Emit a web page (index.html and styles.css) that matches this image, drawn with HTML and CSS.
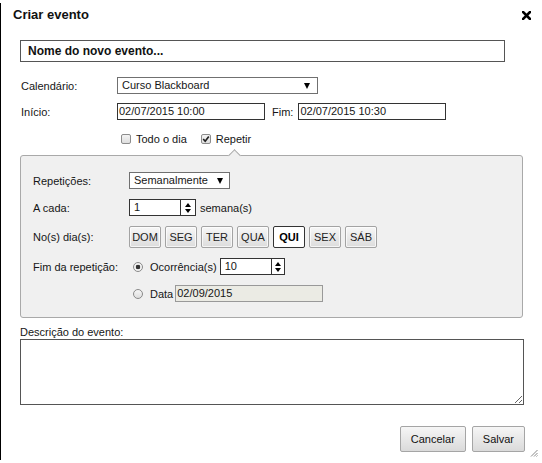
FILE: index.html
```html
<!DOCTYPE html>
<html lang="pt">
<head>
<meta charset="utf-8">
<title>Criar evento</title>
<link rel="stylesheet" href="styles.css">
</head>
<body>
<div class="page">
  <div class="dialog">
    <header class="titlebar">
      <h1 class="title">Criar evento</h1>
      <svg class="close" width="9" height="9" viewBox="0 0 9 9"><path d="M1 1 L8 8 M8 1 L1 8" stroke="#000" stroke-width="2.6" stroke-linecap="square"/></svg>
    </header>
    <div class="body">
      <div class="name-input">Nome do novo evento...</div>
      <div class="form">
        <div class="row r-cal">
          <span class="lbl">Calendário:</span>
          <div class="select cal"><span>Curso Blackboard</span><span class="arrow"></span></div>
        </div>
        <div class="row r-time">
          <span class="lbl">Início:</span>
          <div class="field">02/07/2015 10:00</div>
          <span class="fim">Fim:</span>
          <div class="field">02/07/2015 10:30</div>
        </div>
        <div class="row r-checks">
          <span class="cb"></span><span class="cb-text">Todo o dia</span>
          <span class="cb checked cb-second"><svg width="8" height="8" viewBox="0 0 8 8"><path d="M1.2 4 L3.2 6.2 L6.8 1.6" fill="none" stroke="#222" stroke-width="1.7"/></svg></span><span class="cb-text">Repetir</span>
        </div>
      </div>
      <div class="panel">
        <span class="lbl">Repetições:</span>
        <div class="cell"><div class="select rep"><span>Semanalmente</span><span class="arrow"></span></div></div>

        <span class="lbl">A cada:</span>
        <div class="cell">
          <div class="spin spin-week"><span class="val">1</span><span class="btns"><span class="up"></span><span class="down"></span></span></div>
          <span class="unit">semana(s)</span>
        </div>

        <span class="lbl">No(s) dia(s):</span>
        <div class="cell days">
          <span class="day">DOM</span>
          <span class="day">SEG</span>
          <span class="day">TER</span>
          <span class="day">QUA</span>
          <span class="day on">QUI</span>
          <span class="day">SEX</span>
          <span class="day">SÁB</span>
        </div>

        <span class="lbl">Fim da repetição:</span>
        <div class="cell">
          <span class="radio on"></span><span class="radio-text">Ocorrência(s)</span>
          <div class="spin spin-occ"><span class="val">10</span><span class="btns"><span class="up"></span><span class="down"></span></span></div>
        </div>

        <span class="lbl"></span>
        <div class="cell">
          <span class="radio"></span><span class="radio-text">Data</span>
          <div class="field disabled">02/09/2015</div>
        </div>
      </div>
      <label class="desc-label" for="desc">Descrição do evento:</label>
      <textarea class="desc" id="desc"></textarea>
      <div class="actions">
        <button class="btn" type="button">Cancelar</button>
        <button class="btn" type="button">Salvar</button>
      </div>
    </div>
    <svg class="grip" width="8" height="8" viewBox="0 0 8 8"><path d="M7.5 1 L1 7.5 M7.5 4 L4 7.5 M7.5 6.5 L6.5 7.5" stroke="#888" stroke-width="1"/></svg>
  </div>
</div>
</body>
</html>
```

FILE: styles.css
```css
body {
  margin: 0;
  background: #fff;
  font-family: "Liberation Sans", Arial, sans-serif;
  font-size: 11px;
  color: #161616;
}

.page {
  padding-top: 3px;
}

.dialog {
  position: relative;
  width: 541px;
  height: 457px;
  box-sizing: border-box;
  border-left: 1px solid #000;
}

.titlebar {
  display: flex;
  justify-content: space-between;
  align-items: center;
  height: 16px;
  padding: 4px 10px 0 12px;
}

.title {
  margin: 0;
  font-size: 13px;
  line-height: 16px;
  font-weight: bold;
  color: #111;
}

.close {
  display: block;
}

.body {
  padding: 17px 0 0 19px;
}

.name-input {
  width: 485px;
  height: 22px;
  box-sizing: border-box;
  border: 1px solid #555;
  padding-left: 7px;
  font-size: 12px;
  font-weight: bold;
  line-height: 20px;
  color: #111;
}

.form {
  margin-top: 15px;
  display: flex;
  flex-direction: column;
  gap: 9px;
}

.row {
  display: flex;
  align-items: center;
  height: 17px;
}

.row .lbl {
  width: 96px;
  padding-left: 1px;
}

.r-checks {
  height: 20px;
  padding-left: 101px;
}

.select {
  height: 17px;
  box-sizing: border-box;
  border: 1px solid #707070;
  background: #fff;
  display: flex;
  align-items: center;
  justify-content: space-between;
  padding: 0 7px 0 4px;
  line-height: 15px;
}

.cal {
  width: 201px;
}

.rep {
  width: 101px;
  padding-right: 6px;
}

.arrow {
  width: 0;
  height: 0;
  border-left: 3.5px solid transparent;
  border-right: 3.5px solid transparent;
  border-top: 6px solid #000;
}

.field {
  width: 148px;
  height: 17px;
  box-sizing: border-box;
  border: 1px solid #333;
  background: #fff;
  line-height: 15px;
  padding-left: 1px;
}

.fim {
  margin: 0 5px 0 7px;
}

.cb {
  width: 10px;
  height: 10px;
  box-sizing: border-box;
  border: 1px solid #8c8c8c;
  border-radius: 2px;
  background: linear-gradient(#f3f3f3, #dedede);
  display: flex;
  align-items: center;
  justify-content: center;
}

.cb svg {
  display: block;
}

.cb-text {
  margin-left: 5px;
}

.cb-second {
  margin-left: 14px;
}

.panel {
  position: relative;
  margin-top: 6px;
  width: 503px;
  height: 163px;
  box-sizing: border-box;
  border: 1px solid #a9a9a9;
  border-radius: 3px;
  background: #f0f0f0;
  padding: 16px 0 0 12px;
  display: grid;
  grid-template-columns: 96px auto;
  grid-template-rows: 17px 17px 22px 17px 17px;
  row-gap: 10px;
  align-items: center;
}

.panel::before {
  content: "";
  position: absolute;
  left: 209px;
  top: -5.5px;
  width: 9px;
  height: 9px;
  box-sizing: border-box;
  border-top: 1px solid #a9a9a9;
  border-left: 1px solid #a9a9a9;
  background: #f0f0f0;
  transform: rotate(45deg);
}

.cell {
  display: flex;
  align-items: center;
  height: 100%;
}

.spin {
  display: flex;
  height: 17px;
  box-sizing: border-box;
  border: 1px solid #333;
  background: #fff;
}

.spin .val {
  flex: 1;
  padding-left: 4px;
  line-height: 15px;
}

.spin .btns {
  width: 14px;
  border-left: 1px solid #333;
  display: flex;
  flex-direction: column;
  align-items: center;
  justify-content: center;
  gap: 2px;
}

.spin .up {
  width: 0;
  height: 0;
  border-left: 3px solid transparent;
  border-right: 3px solid transparent;
  border-bottom: 4px solid #000;
}

.spin .down {
  width: 0;
  height: 0;
  border-left: 3px solid transparent;
  border-right: 3px solid transparent;
  border-top: 4px solid #000;
}

.spin-week {
  width: 67px;
}

.spin-occ {
  width: 65px;
  margin-left: 3px;
}

.spin-occ .btns {
  width: 12px;
}

.unit {
  margin-left: 4px;
}

.days {
  gap: 4px;
}

.day {
  width: 32px;
  height: 22px;
  box-sizing: border-box;
  border: 1px solid #a3a3a3;
  border-radius: 2px;
  background: linear-gradient(#f7f7f7, #dcdcdc);
  box-shadow: inset 0 0 0 1px rgba(255, 255, 255, 0.7);
  line-height: 20px;
  text-align: center;
  color: #222;
}

.day.on {
  background: #fff;
  border-color: #333;
  box-shadow: none;
  font-weight: bold;
  color: #000;
}

.radio {
  width: 10px;
  height: 10px;
  box-sizing: border-box;
  border: 1px solid #8a8a8a;
  border-radius: 50%;
  background: linear-gradient(#f6f6f6, #dedede);
  margin-left: 4px;
}

.radio.on {
  background: radial-gradient(circle, #333 0, #333 2px, #f2f2f2 2.6px);
}

.radio-text {
  margin-left: 7px;
}

.field.disabled {
  margin-left: 2px;
  background: #ebebe4;
  border-color: #999;
}

.desc-label {
  display: block;
  margin-top: 8px;
  line-height: 13px;
}

.desc {
  display: block;
  width: 504px;
  height: 66px;
  box-sizing: border-box;
  margin: 0;
  padding: 2px;
  border: 1px solid #555;
  resize: both;
  font-family: "Liberation Sans", Arial, sans-serif;
  font-size: 11px;
}

.actions {
  width: 505px;
  margin-top: 21px;
  display: flex;
  justify-content: flex-end;
  gap: 6px;
}

.btn {
  height: 26px;
  padding: 0 10px;
  border: 1px solid #a5a5a5;
  border-radius: 2px;
  background: linear-gradient(#f6f6f6, #dadada);
  font-family: "Liberation Sans", Arial, sans-serif;
  font-size: 11px;
  color: #111;
}

.grip {
  position: absolute;
  right: 3px;
  bottom: 3px;
}
```
